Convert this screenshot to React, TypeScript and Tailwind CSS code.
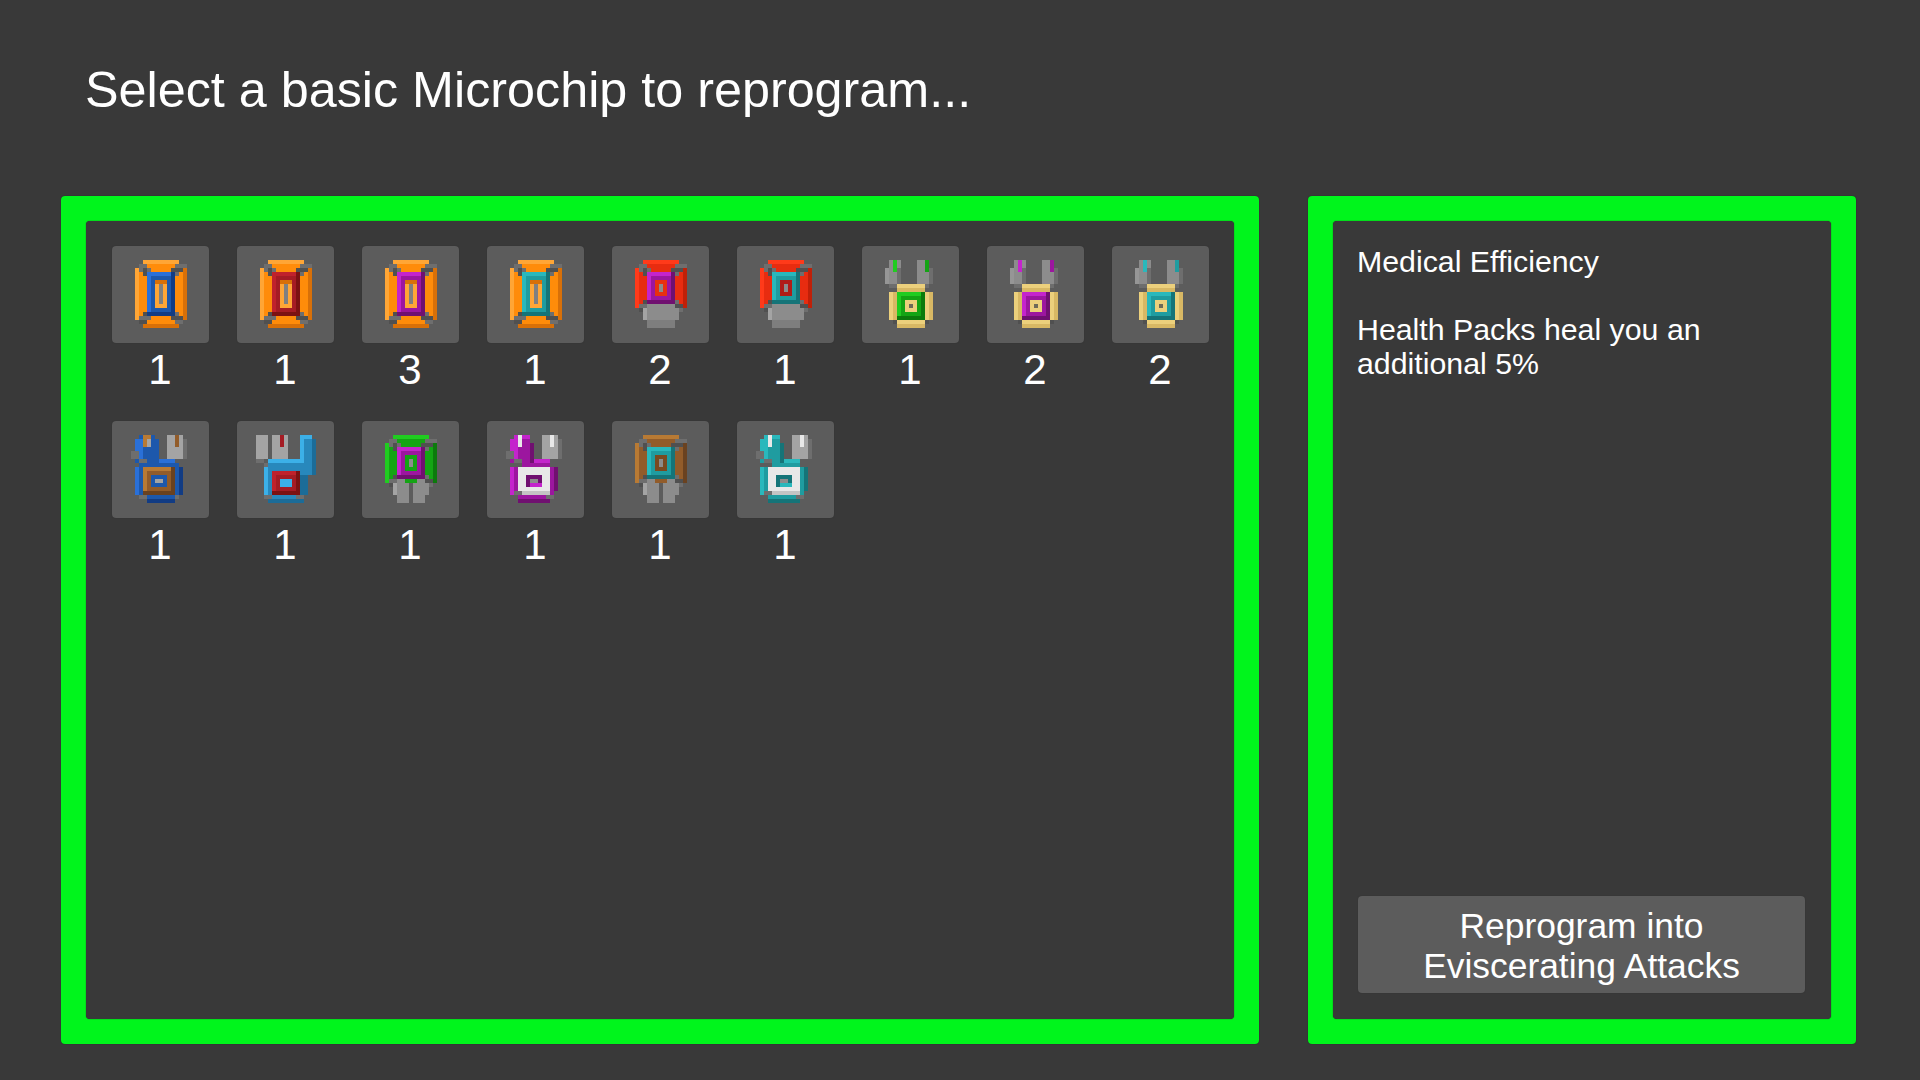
type Shade = { l: string; m: string; d: string };
type Px = [number, number, number, number, string];

const blue: Shade = { l: "#2a70d8", m: "#1d58ac", d: "#123c84" };
const red: Shade = { l: "#c0222c", m: "#a51c24", d: "#7c1212" };
const magenta: Shade = { l: "#c424cc", m: "#9c169f", d: "#701070" };
const teal: Shade = { l: "#2ab8bc", m: "#1f9ca0", d: "#157478" };
const green: Shade = { l: "#20cc20", m: "#14a414", d: "#0c7a0c" };
const brown: Shade = { l: "#b87a34", m: "#925c2a", d: "#6a4220" };
const orange: Shade = { l: "#ffa636", m: "#ff8c0a", d: "#d87008" };
const scarlet: Shade = { l: "#ff3a1a", m: "#e82c10", d: "#c02008" };
const sky: Shade = { l: "#3cb0e8", m: "#2888bc", d: "#1c6c98" };
const gold = { l: "#ecd07c", m: "#d8b864" };
const white = "#e8e8e8";

const g1 = "#505050";
const g2 = "#6e6e6e";
const g3 = "#8c8c8c";
const g4 = "#a4a4a4";

// diagonal grey struts at the four corners of the chip body
function struts(bottom: number): Px[] {
  return [
    [1, 1, 2, 1, g2], [1, 2, 3, 1, g2], [2, 2, 1, 1, g1], [2, 3, 2, 1, g1],
    [10, 1, 3, 1, g2], [9, 2, 3, 1, g1], [9, 3, 2, 1, g2],
    [2, bottom - 2, 2, 1, g1], [1, bottom - 1, 3, 1, g2], [1, bottom, 2, 1, g1],
    [9, bottom - 2, 2, 1, g2], [9, bottom - 1, 3, 1, g1], [10, bottom, 2, 1, g2],
  ];
}

function frame(c: Shade, x: number, y: number, w: number, h: number): Px[] {
  return [
    [x, y, w, h, c.m],
    [x, y, w, 1, c.l],
    [x, y, 1, h, c.l],
    [x + w - 1, y, 1, h, c.d],
    [x, y + h - 1, w, 1, c.d],
  ];
}

// big chip with a tall slot in the middle
function orangeChip(c: Shade): Px[] {
  return [
    [2, 0, 9, 1, orange.l],
    [3, 1, 7, 1, orange.m],
    [0, 2, 13, 13, orange.m],
    [0, 2, 1, 13, orange.l],
    [12, 2, 1, 13, orange.d],
    [3, 15, 7, 1, orange.m],
    [2, 16, 9, 1, orange.d],
    ...struts(15),
    ...frame(c, 3, 3, 7, 11),
    [5, 5, 3, 7, orange.l],
    [5, 5, 3, 1, orange.d],
    [6, 6, 1, 5, "#808080"],
  ];
}

// scarlet / green / brown chip with a foot below
function footChip(body: Shade, c: Shade, hole: string, twoProng: boolean): Px[] {
  const foot: Px[] = twoProng
    ? [
        [2, 12, 4, 3, g3], [7, 12, 4, 3, g3],
        [3, 15, 3, 2, g3], [7, 15, 3, 2, g3],
        [2, 12, 1, 3, g4], [3, 11, 2, 1, g3], [8, 11, 2, 1, g3],
      ]
    : [
        [3, 11, 7, 1, g3], [2, 12, 9, 3, g3],
        [3, 15, 7, 2, "#7e7e7e"], [2, 12, 1, 3, g4],
      ];
  return [
    [2, 0, 9, 1, body.l],
    [3, 1, 7, 1, body.m],
    [0, 2, 13, 10, body.m],
    [0, 2, 1, 10, body.l],
    [12, 2, 1, 10, body.d],
    ...struts(12),
    ...frame(c, 3, 3, 7, 8),
    [5, 5, 3, 4, hole],
    [6, 6, 1, 2, g3],
    ...foot,
  ];
}

function goldChip(c: Shade): Px[] {
  return [
    [1, 0, 3, 6, g3], [0, 2, 1, 4, "#969696"], [3, 2, 1, 4, g2],
    [8, 0, 3, 6, g3], [11, 2, 1, 4, g2],
    [2, 0, 1, 3, c.l], [10, 0, 1, 3, c.m],
    [1, 6, 2, 1, g2], [9, 6, 2, 1, g2],
    [3, 6, 7, 1, gold.l], [3, 7, 7, 1, gold.m],
    [1, 8, 1, 7, gold.l], [2, 8, 1, 7, gold.m],
    [10, 8, 1, 7, gold.l], [11, 8, 1, 7, gold.m],
    ...frame(c, 3, 8, 7, 7),
    [5, 10, 3, 3, gold.l],
    [6, 11, 1, 1, "#6e6a58"],
    [3, 15, 7, 1, gold.l],
    [3, 16, 7, 1, gold.m],
    [2, 15, 1, 1, g1], [10, 15, 1, 1, g1],
  ];
}

function leftProngChip(c: Shade, f: Shade): Px[] {
  return [
    [1, 0, 4, 7, c.m], [0, 1, 6, 6, c.m], [0, 1, 2, 5, c.l],
    [2, 0, 2, 3, f.l], [3, 1, 1, 2, g4],
    [-1, 4, 2, 2, g2], [1, 6, 2, 1, g2],
    [8, 0, 4, 6, g4], [12, 1, 1, 5, g2], [10, 0, 1, 3, f.m],
    [6, 6, 4, 1, c.l], [1, 7, 10, 1, c.m], [0, 8, 12, 7, c.m], [0, 8, 1, 7, c.l], [11, 8, 1, 7, c.d],
    ...frame(f, 2, 8, 8, 7),
    [4, 10, 4, 3, c.m], [5, 11, 2, 1, g4],
    [1, 15, 2, 1, g2], [9, 15, 2, 1, g2],
    [3, 15, 7, 1, c.m], [3, 16, 7, 1, c.d],
  ];
}

function rightProngChip(c: Shade, f: Shade): Px[] {
  return [
    [-1, 0, 3, 6, g4], [3, 0, 4, 6, g4], [5, 0, 1, 3, f.m],
    [10, 0, 3, 10, c.m], [10, 1, 1, 6, c.l], [10, 0, 3, 1, c.l], [13, 1, 1, 9, c.d],
    [-1, 6, 2, 1, g2], [1, 7, 2, 1, g2],
    [2, 6, 8, 1, c.l], [2, 7, 8, 1, c.m],
    [1, 8, 10, 7, c.m], [1, 8, 1, 7, c.l], [10, 10, 2, 5, c.d],
    ...frame(f, 3, 9, 7, 6),
    [5, 11, 3, 2, c.l],
    [1, 15, 2, 1, g2], [9, 15, 2, 1, g2],
    [3, 15, 6, 1, c.m], [2, 16, 9, 1, c.d],
  ];
}

function whiteChip(c: Shade): Px[] {
  return [
    [0, 1, 5, 6, c.m], [1, 0, 4, 1, c.l], [0, 1, 2, 5, c.l], [2, 0, 1, 3, white], [5, 2, 1, 5, c.d],
    [-1, 4, 2, 2, g2], [1, 6, 2, 1, g2],
    [8, 0, 4, 6, g4], [12, 1, 1, 5, g2], [10, 0, 1, 3, white],
    [6, 6, 4, 1, c.l], [3, 7, 7, 1, c.m],
    [0, 8, 11, 7, c.m], [0, 8, 1, 7, c.l], [11, 8, 1, 6, c.d],
    [2, 8, 8, 7, white], [2, 14, 8, 1, "#c4c4c4"],
    [4, 10, 4, 3, c.d], [5, 11, 2, 1, g3], [5, 12, 3, 1, c.l],
    [1, 14, 2, 1, g2], [9, 15, 2, 1, g2],
    [2, 15, 7, 1, c.m], [2, 16, 8, 1, c.d],
  ];
}

const chips: { px: Px[]; n: number }[] = [
  { px: orangeChip(blue), n: 1 },
  { px: orangeChip(red), n: 1 },
  { px: orangeChip(magenta), n: 3 },
  { px: orangeChip(teal), n: 1 },
  { px: footChip(scarlet, magenta, "#e83010", false), n: 2 },
  { px: footChip(scarlet, teal, "#b01c18", false), n: 1 },
  { px: goldChip(green), n: 1 },
  { px: goldChip(magenta), n: 2 },
  { px: goldChip(teal), n: 2 },
  { px: leftProngChip(blue, brown), n: 1 },
  { px: rightProngChip(sky, red), n: 1 },
  { px: footChip(green, magenta, "#14a414", true), n: 1 },
  { px: whiteChip(magenta), n: 1 },
  { px: footChip(brown, teal, "#7a4a20", true), n: 1 },
  { px: whiteChip(teal), n: 1 },
];

function Chip({ px, n }: { px: Px[]; n: number }) {
  return (
    <div className="flex flex-col items-center">
      <div className="flex h-[97px] w-[97px] items-start justify-center rounded-[4px] bg-[#5c5c5c] pt-[14px] shadow-[0_0_1px_#2a2a2a]">
        <svg width="68" height="68" viewBox="-2 0 17 17" shapeRendering="crispEdges">
          {px.map(([x, y, w, h, c], i) => (
            <rect key={i} x={x} y={y} width={w} height={h} fill={c} />
          ))}
        </svg>
      </div>
      <span className="mt-[4px] pr-[1px] text-[42px] leading-[46px] text-white">{n}</span>
    </div>
  );
}

export default function App() {
  return (
    <div className="flex h-screen w-full flex-col bg-[#393939] pl-[61px] font-['Liberation_Sans',Arial,sans-serif] text-white">
      <h1 className="flex h-[196px] items-start pl-[24px] pt-[60px] text-[50.3px] leading-[60px] font-normal">
        Select a basic Microchip to reprogram...
      </h1>
      <div className="flex gap-[49px]">
        <div className="h-[848px] w-[1198px] rounded-[4px] bg-[#00f51c] p-[25px] shadow-[0_0_1px_#1a1a1a]">
          <div className="grid h-full grid-cols-[repeat(9,97px)] content-start gap-x-[28px] gap-y-[28px] rounded-[4px] bg-[#393939] pl-[26px] pt-[25px] shadow-[0_0_1px_#1a1a1a]">
            {chips.map((c, i) => (
              <Chip key={i} px={c.px} n={c.n} />
            ))}
          </div>
        </div>
        <div className="h-[848px] w-[548px] rounded-[4px] bg-[#00f51c] p-[25px] shadow-[0_0_1px_#1a1a1a]">
          <div className="flex h-full flex-col justify-between rounded-[4px] bg-[#393939] px-[24px] pb-[26px] pt-[24px] shadow-[0_0_1px_#1a1a1a]">
            <div className="text-[30.3px] leading-[34px]">
              <p>Medical Efficiency</p>
              <p className="mt-[34px] w-[400px]">Health Packs heal you an additional 5%</p>
            </div>
            <button className="ml-[1px] flex h-[97px] w-[447px] flex-col items-center justify-center rounded-[4px] bg-[#5c5c5c] pt-[2px] text-[35.4px] leading-[40px] text-white shadow-[0_0_1px_#2a2a2a]">
              <span>Reprogram into</span>
              <span>Eviscerating Attacks</span>
            </button>
          </div>
        </div>
      </div>
    </div>
  );
}
